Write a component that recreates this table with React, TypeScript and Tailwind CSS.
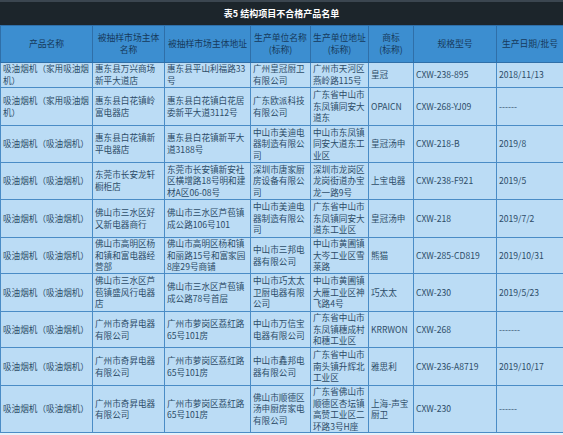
const columns = [
  { label: ["产品名称"], width: "w-[92px]" },
  { label: ["被抽样市场主体", "名称"], width: "w-[72px]" },
  { label: ["被抽样市场主体地址"], width: "w-[86px]" },
  { label: ["生产单位名称", "(标称)"], width: "w-[60px]" },
  { label: ["生产单位地址", "(标称)"], width: "w-[58px]" },
  { label: ["商标", "(标称)"], width: "w-[45px]" },
  { label: ["规格型号"], width: "w-[83px]" },
  { label: ["生产日期/批号"], width: "w-[67px]" },
];

const rows = [
  {
    h: "h-[25px]",
    cells: [
      "吸油烟机（家用吸油烟机）",
      "惠东县万兴商场新平大道店",
      "惠东县平山利福路33号",
      "广州皇冠厨卫有限公司",
      "广州市天河区燕岭路115号",
      "皇冠",
      "CXW-238-895",
      "2018/11/13",
    ],
  },
  {
    h: "h-[38px]",
    cells: [
      "吸油烟机（家用吸油烟机）",
      "惠东县白花镇岭富电器店",
      "惠东县白花镇白花居委新平大道3112号",
      "广东欧派科技有限公司",
      "广东省中山市东凤镇同安大道东",
      "OPAICN",
      "CXW-268-YJ09",
      "------",
    ],
  },
  {
    h: "h-[37px]",
    cells: [
      "吸油烟机（吸油烟机）",
      "惠东县白花镇新平电器店",
      "惠东县白花镇新平大道3188号",
      "中山市美迪电器制造有限公司",
      "中山市东凤镇同安大道东工业区",
      "皇冠汤申",
      "CXW-218-B",
      "2019/8",
    ],
  },
  {
    h: "h-[37px]",
    cells: [
      "吸油烟机（吸油烟机）",
      "东莞市长安龙轩橱柜店",
      "东莞市长安镇新安社区横增路18号明和建材A区06-08号",
      "深圳市唐家厨房设备有限公司",
      "深圳市龙岗区龙岗街道办宝龙一路9号",
      "上宝电器",
      "CXW-238-F921",
      "2019/5",
    ],
  },
  {
    h: "h-[38px]",
    cells: [
      "吸油烟机（吸油烟机）",
      "佛山市三水区好又新电器商行",
      "佛山市三水区芦苞镇成公路106号101",
      "中山市美迪电器制造有限公司",
      "广东省中山市东凤镇同安大道东工业区",
      "皇冠汤申",
      "CXW-218",
      "2019/7/2",
    ],
  },
  {
    h: "h-[36px]",
    cells: [
      "吸油烟机（吸油烟机）",
      "佛山市高明区杨和镇和富电器经营部",
      "佛山市高明区杨和镇和丽路15号和富家园8座29号商铺",
      "中山市三邦电器有限公司",
      "中山市黄圃镇大岑工业区雪莱路",
      "熊猫",
      "CXW-285-CD819",
      "2019/10/31",
    ],
  },
  {
    h: "h-[38px]",
    cells: [
      "吸油烟机（吸油烟机）",
      "佛山市三水区芦苞镇盛风行电器店",
      "佛山市三水区芦苞镇成公路78号首层",
      "中山市巧太太卫厨电器有限公司",
      "中山市黄圃镇大雁工业区神飞路4号",
      "巧太太",
      "CXW-230",
      "2019/5/23",
    ],
  },
  {
    h: "h-[36px]",
    cells: [
      "吸油烟机（吸油烟机）",
      "广州市奇昇电器有限公司",
      "广州市萝岗区荔红路65号101房",
      "中山市万信宝电器有限公司",
      "广东省中山市东凤镇穗成村和穗工业区",
      "KRRWON",
      "CXW-268",
      "-------",
    ],
  },
  {
    h: "h-[38px]",
    cells: [
      "吸油烟机（吸油烟机）",
      "广州市奇昇电器有限公司",
      "广州市萝岗区荔红路65号101房",
      "中山市鑫邦电器有限公司",
      "广东省中山市南头镇升辉北工业区",
      "雅思利",
      "CXW-236-A8719",
      "2019/10/17",
    ],
  },
  {
    h: "h-[47px]",
    cells: [
      "吸油烟机（吸油烟机）",
      "广州市奇昇电器有限公司",
      "广州市萝岗区荔红路65号101房",
      "佛山市顺德区汤申厨房家电有限公司",
      "广东省佛山市顺德区杏坛镇高赞工业区二环路3号H座",
      "上海-声宝厨卫",
      "CXW-230",
      "------",
    ],
  },
];

export default function App() {
  return (
    <div
      className="w-[563px] h-[435px] overflow-hidden bg-[#e6f1f9]"
      style={{ fontFamily: '"Noto Sans CJK SC", "Noto Sans", sans-serif' }}
    >
      <div className="flex h-[25px] items-center justify-center border-t-2 border-[#3b4650] bg-[#1c252b] text-[9px] font-bold text-white">
        表5 结构项目不合格产品名单
      </div>
      <table className="w-[563px] table-fixed border-collapse text-[8.6px] leading-[11.6px]">
        <colgroup>
          {columns.map((col, i) => (
            <col key={i} className={col.width} />
          ))}
        </colgroup>
        <thead>
          <tr className="h-[37px] bg-[#3c8ed0]">
            {columns.map((col, i) => (
              <th
                key={i}
                className="border border-[#2f6fa8] px-0 text-center align-middle text-[8.8px] leading-[12px] font-normal text-[#163a5c]"
              >
                {col.label.map((line, j) => (
                  <div key={j} className="whitespace-nowrap">
                    {line}
                  </div>
                ))}
              </th>
            ))}
          </tr>
        </thead>
        <tbody>
          {rows.map((row, i) => (
            <tr key={i} className={`${row.h} bg-[#bbdcf5]`}>
              {row.cells.map((cell, j) => (
                <td
                  key={j}
                  className="border border-[#4a8cc6] py-0 pl-[2px] pr-px align-middle text-left text-[#2d4c68] break-all"
                >
                  {cell}
                </td>
              ))}
            </tr>
          ))}
        </tbody>
      </table>
    </div>
  );
}
